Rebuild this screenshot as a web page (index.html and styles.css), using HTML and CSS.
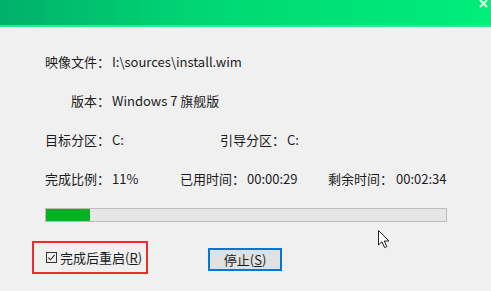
FILE: index.html
```html
<!DOCTYPE html>
<html lang="zh-CN">
<head>
<meta charset="utf-8">
<link rel="stylesheet" href="styles.css">
</head>
<body>
<div class="window">
  <div class="titlebar">
    <svg class="close" width="9" height="8" viewBox="0 0 9 8">
      <path d="M1 0 L8 7 M8 0 L1 7" stroke="#e8fff0" stroke-width="2"/>
    </svg>
  </div>
  <div class="content">
    <div class="row">
      <span class="label">映像文件：</span><span class="value">I:\sources\install.wim</span>
    </div>
    <div class="row">
      <span class="label">版本：</span><span class="value">Windows 7 旗舰版</span>
    </div>
    <div class="row">
      <span class="label">目标分区：</span><span class="value w110">C:</span>
      <span class="label">引导分区：</span><span class="value">C:</span>
    </div>
    <div class="row">
      <span class="label">完成比例：</span><span class="value w70">11%</span>
      <span class="label">已用时间：</span><span class="value w81">00:00:29</span>
      <span class="label">剩余时间：</span><span class="value v3">00:02:34</span>
    </div>
    <div class="progress"><div class="fill" style="width:11%"></div></div>
    <div class="footer">
      <div class="restart">
        <svg class="check" width="11" height="11" viewBox="0 0 11 11">
          <rect x="0.5" y="0.5" width="10" height="10" fill="none" stroke="#333" stroke-width="1"/>
          <path d="M2.3 5.6 L4.4 7.8 L8.7 2.8" fill="none" stroke="#333" stroke-width="1.1"/>
        </svg>
        <span>完成后重启(<u>R</u>)</span>
      </div>
      <button class="stop">停止(<u>S</u>)</button>
    </div>
  </div>
  <svg class="cursor" width="13" height="19" viewBox="0 0 13 19">
    <path d="M0.5 0.5 L0.5 15 L4 11.8 L6.6 17.6 L8.8 16.6 L6.3 11 L11 11 Z" fill="#fff" stroke="#222" stroke-width="1"/>
  </svg>
</div>
</body>
</html>
```
FILE: styles.css
```css
html, body {
  margin: 0;
  padding: 0;
  background: #f0f0f0;
}
.window {
  width: 491px;
  height: 291px;
  position: relative;
  overflow: hidden;
  font-family: "Noto Sans CJK SC", "Noto Sans", sans-serif;
  font-size: 13px;
  color: #1b1b1b;
}
.titlebar {
  height: 25px;
  background: linear-gradient(90deg, #00b06a 0%, #00d674 40%, #00ee7a 100%);
  border-bottom: 2px solid #2fe88f;
  position: relative;
}
.close {
  position: absolute;
  right: 3px;
  top: 0;
}
.content {
  padding: 15px 0 0 45px;
}
.row {
  height: 39px;
  display: flex;
  align-items: center;
  white-space: nowrap;
}
.label {
  display: inline-block;
  width: 65px;
  text-align: right;
}
.value {
  display: inline-block;
  margin-left: 2px;
}
.w110 { width: 108px; }
.w70 { width: 68px; }
.w81 { width: 81px; }
.v3 { margin-left: 3px; }
.progress {
  margin-top: 10px;
  width: 400px;
  height: 12px;
  border: 1px solid #bcbcbc;
  background: #e6e6e6;
}
.fill {
  height: 100%;
  background: #06b025;
}
.footer {
  display: flex;
  align-items: flex-start;
  margin-top: 19px;
  margin-left: -13px;
}
.restart {
  width: 112px;
  height: 29px;
  border: 2px solid #ee2c2c;
  display: flex;
  align-items: center;
  box-sizing: content-box;
}
.check {
  margin-left: 12px;
  margin-right: 3px;
}
.restart u, .stop u {
  text-decoration: underline;
  text-underline-offset: 1px;
}
.stop {
  margin-left: 60px;
  margin-top: 7px;
  width: 74px;
  height: 23px;
  background: #e1e1e1;
  border: 2px solid #0078d7;
  box-sizing: border-box;
  font-family: inherit;
  font-size: 13px;
  color: #1b1b1b;
  padding: 0;
  line-height: 18px;
}
.cursor {
  position: absolute;
  left: 378px;
  top: 230px;
}
```
